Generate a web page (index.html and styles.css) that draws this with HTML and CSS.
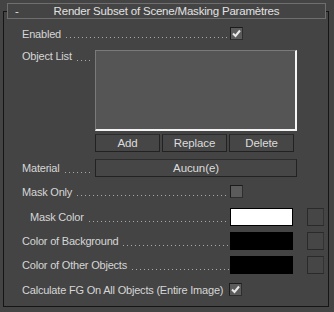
FILE: index.html
```html
<!DOCTYPE html>
<html lang="en">
	<head>
		<title>Render Subset of Scene/Masking</title>
		<link rel="stylesheet" href="styles.css">
	</head>
	<body>
		<div class="group">
			<div class="title">
				<span class="toggle">-</span>
				<span class="caption">Render Subset of Scene/Masking Paramètres</span>
			</div>

			<div class="row r-check r-enabled">
				<span class="label">Enabled</span>
				<span class="leader"></span>
				<span class="check on"><svg viewBox="0 0 9 9"><path d="M1 4.5 L3.5 7 L8 1.5" /></svg></span>
			</div>

			<div class="row r-list">
				<span class="label">Object List</span>
				<span class="leader"></span>
				<div class="listbox"></div>
			</div>

			<div class="row r-buttons">
				<button class="btn">Add</button>
				<button class="btn">Replace</button>
				<button class="btn">Delete</button>
			</div>

			<div class="row r-material">
				<span class="label">Material</span>
				<span class="leader"></span>
				<button class="btn wide">Aucun(e)</button>
			</div>

			<div class="row r-check r-mask">
				<span class="label">Mask Only</span>
				<span class="leader"></span>
				<span class="check"></span>
			</div>

			<div class="row r-color indent">
				<span class="label">Mask Color</span>
				<span class="leader"></span>
				<span class="swatch white"></span>
				<span class="picker"></span>
			</div>

			<div class="row r-color">
				<span class="label">Color of Background</span>
				<span class="leader"></span>
				<span class="swatch"></span>
				<span class="picker"></span>
			</div>

			<div class="row r-color">
				<span class="label">Color of Other Objects</span>
				<span class="leader"></span>
				<span class="swatch"></span>
				<span class="picker"></span>
			</div>

			<div class="row r-check r-calc">
				<span class="label">Calculate FG On All Objects (Entire Image)</span>
				<span class="leader"></span>
				<span class="check on"><svg viewBox="0 0 9 9"><path d="M1 4.5 L3.5 7 L8 1.5" /></svg></span>
			</div>
		</div>
	</body>
</html>
```

FILE: styles.css
```css
* {
  margin: 0;
  padding: 0;
  box-sizing: border-box;
}

body {
  width: 334px;
  height: 312px;
  padding: 11px 5px 0 3px;
  background-color: #444444;
  font-family: "Liberation Sans", Arial, sans-serif;
  font-size: 11px;
  letter-spacing: -0.2px;
  color: #d6d6d6;
  overflow: hidden;
}

.group {
  height: 296px;
  border: 1px solid #151515;
  padding: 0 0 0 18px;
}

.title {
  position: relative;
  display: flex;
  align-items: center;
  height: 16px;
  margin: -9px 2px 0 -15px;
  border: 1px solid #6e6e6e;
  background-color: #444444;
  color: #e2e2e2;
  font-size: 11.5px;
  letter-spacing: -0.2px;
}

.toggle {
  width: 20px;
  padding-left: 7px;
  line-height: 12px;
}

.caption {
  flex: 1;
  text-align: center;
  padding-right: 20px;
}

.row {
  display: flex;
  align-items: center;
}

.label {
  white-space: nowrap;
}

.leader {
  flex: 1;
  align-self: stretch;
  margin: 0 3px 0 5px;
  background-image: linear-gradient(to right, #a8a8a8 1px, transparent 1px);
  background-size: 4px 1px;
  background-repeat: repeat-x;
  background-position: 0 calc(50% + 4px);
}

.r-check {
  width: 221px;
  height: 13px;
}

.r-enabled {
  margin-top: 8px;
}

.r-list {
  align-items: flex-start;
  width: 275px;
  height: 81px;
  margin-top: 10px;
}

.r-list .leader {
  align-self: flex-start;
  height: 14px;
  margin-right: 2px;
  background-position: 0 10px;
}

.listbox {
  width: 202px;
  height: 81px;
  background-color: #555555;
  border-top: 1px solid #7a7a7a;
  border-left: 1px solid #7a7a7a;
  border-right: 2px solid #f4f4f4;
  border-bottom: 2px solid #f4f4f4;
}

.r-buttons {
  height: 18px;
  margin-top: 3px;
  padding-left: 73px;
  gap: 2px;
}

.btn {
  width: 65px;
  height: 18px;
  border: 1px solid #222222;
  border-top-color: #2c2c2c;
  background-color: #464646;
  color: #dcdcdc;
  font-family: inherit;
  font-size: 11.5px;
  letter-spacing: -0.1px;
}

.btn.wide {
  width: 202px;
}

.r-material {
  width: 275px;
  height: 18px;
  margin-top: 7px;
}

.r-material .leader {
  margin-right: 2px;
}

.r-mask {
  margin-top: 8px;
}

.check {
  display: flex;
  align-items: center;
  justify-content: center;
  width: 13px;
  height: 13px;
  border: 1px solid #1b1b1b;
  border-right-color: #2e2e2e;
  border-bottom-color: #2e2e2e;
  background-color: #5b5b5b;
}

.check svg {
  width: 9px;
  height: 9px;
  fill: none;
  stroke: #e8e8e8;
  stroke-width: 2;
}

.r-color {
  width: 302px;
  height: 18px;
  margin-top: 6px;
}

.r-color.indent {
  margin-top: 10px;
  padding-left: 8px;
}

.r-color .leader {
  margin-right: 1px;
}

.swatch {
  width: 63px;
  height: 18px;
  border: 1px solid #000000;
  background-color: #000000;
}

.swatch.white {
  background-color: #ffffff;
}

.picker {
  width: 17px;
  height: 18px;
  margin-left: 14px;
  border: 1px solid #2a2a2a;
  border-right-color: #333333;
  background-color: #464646;
}

.r-calc {
  margin-top: 9px;
}

.r-calc .leader {
  background-image: none;
  flex: 0 0 0;
  margin: 0 0 0 6px;
}
```
